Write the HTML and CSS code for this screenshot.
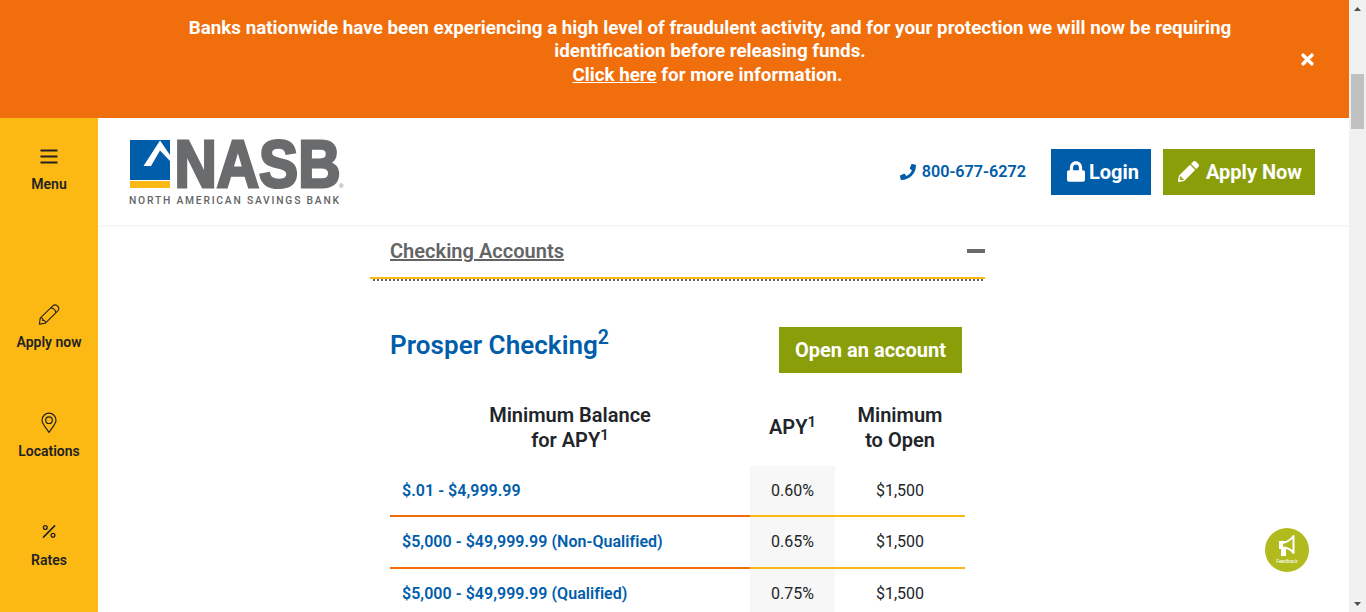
FILE: index.html
```html
<!DOCTYPE html>
<html lang="en">
<head>
<meta charset="utf-8">
<title>NASB Checking Rates</title>
<link rel="stylesheet" href="styles.css">
</head>
<body>
<div class="page">
  <div class="alert">
    <p class="alert-text">Banks nationwide have been experiencing a high level of fraudulent activity, and for your protection we will now be requiring<br>identification before releasing funds.<br><span class="alert-more"><a class="alert-link">Click here</a> for more information.</span></p>
    <svg class="close" viewBox="0 0 12 12"><path d="M2 2l8 8M10 2l-8 8" stroke="#fff" stroke-width="3.2" stroke-linecap="round"/></svg>
  </div>
  <div class="body">
    <nav class="side">
      <a class="side-item">
        <svg class="side-icon" viewBox="0 0 24 24"><path d="M3.5 6.5h17M3.5 12.5h17M3.5 18.5h17" stroke="#222" stroke-width="1.8"/></svg>
        <span>Menu</span>
      </a>
      <a class="side-item">
        <svg class="side-icon" viewBox="0 0 24 24" fill="none" stroke="#222" stroke-width="1.1" stroke-linejoin="round"><path d="M2.4 22.1l.8-6L15.8 3.9c1.5-1.5 3.4-1.2 4.8.2s1.6 3.2.2 4.7L8.2 21.3zM3.2 16.1c2.2-.4 3 .5 2.5 2.4 1.9-.4 2.900.6 2.5 2.8M13.8 5.9c2.7 0 4.9 2.2 5 4.8"/></svg>
        <span>Apply now</span>
      </a>
      <a class="side-item">
        <svg class="side-icon" viewBox="0 0 24 24" fill="none" stroke="#222" stroke-width="1.2"><path d="M12 21.300C9 17 5 12.700 5 9.200a7 7 0 0 1 14 0C19 12.700 15 17 12 21.300z"/><circle cx="12" cy="9.200" r="3.300"/></svg>
        <span>Locations</span>
      </a>
      <a class="side-item">
        <svg class="side-icon" viewBox="0 0 24 24" fill="none" stroke="#222" stroke-width="1.3"><path d="M17.600 5.900L6.500 17.100" stroke-width="1.600" stroke-linecap="round"/><circle cx="8.300" cy="7.500" r="1.900"/><circle cx="16" cy="15.300" r="1.900"/></svg>
        <span>Rates</span>
      </a>
    </nav>
    <div class="main">
      <header class="header">
        <svg class="logo" viewBox="0 0 216 68">
          <path d="M1 2h40v40H1z" fill="#005daa"/><path d="M1 43h40v7H1z" fill="#fdb913"/>
          <path d="M14.500 28L31 2.500 41 17v6L31 12.500 22 28z" fill="#fff"/>
          <text class="logo-name" x="45.500" y="49" textLength="166" lengthAdjust="spacingAndGlyphs">NASB</text>
          <text class="logo-reg" x="210" y="50">®</text>
          <text class="logo-sub" x="0" y="66" textLength="210">NORTH AMERICAN SAVINGS BANK</text>
        </svg>
        <div class="actions">
          <a class="phone"><svg class="phone-icon" viewBox="0 0 512 512" fill="currentColor"><path d="M493.400 24.600l-104-24c-11.300-2.600-22.900 3.300-27.500 13.900l-48 112c-4.200 9.800-1.400 21.300 6.900 28l60.600 49.600c-36 76.700-98.900 140.500-177.200 177.200l-49.600-60.600c-6.800-8.300-18.200-11.100-28-6.900l-112 48C3.900 366.500-2 378.100.6 389.400l24 104C27.100 504.200 36.700 512 48 512c256.100 0 464-207.500 464-464 0-11.200-7.700-20.900-18.600-23.400z"/></svg><span>800-677-6272</span></a>
          <a class="btn btn-login"><svg class="lock-icon" viewBox="0 0 448 512" fill="currentColor"><path d="M400 224h-24v-72C376 68.200 307.800 0 224 0S72 68.200 72 152v72H48c-26.500 0-48 21.500-48 48v192c0 26.500 21.500 48 48 48h352c26.500 0 48-21.500 48-48V272c0-26.500-21.500-48-48-48zm-104 0H152v-72c0-39.700 32.300-72 72-72s72 32.300 72 72v72z"/></svg><span>Login</span></a>
          <a class="btn btn-apply"><svg class="pencil-icon" viewBox="0 0 512 512" fill="currentColor"><path d="M497.900 142.100l-46.100 46.100c-4.700 4.700-12.300 4.700-17 0l-111-111c-4.700-4.700-4.700-12.300 0-17l46.100-46.100c18.700-18.700 49.100-18.700 67.900 0l60.100 60.100c18.800 18.700 18.800 49.100 0 67.900zM284.200 99.800L21.600 362.400.4 483.900c-2.900 16.400 11.400 30.600 27.800 27.800l121.500-21.300 262.600-262.600c4.700-4.700 4.700-12.300 0-17l-111-111c-4.800-4.700-12.400-4.700-17.100 0zM88 424h48v36.300l-64.500 11.300-31.100-31.100L51.700 376H88v48z"/></svg><span>Apply Now</span></a>
        </div>
      </header>
      <section class="content">
        <div class="accordion"><a class="accordion-title">Checking Accounts</a><span class="minus"></span></div>
        <svg class="rule" viewBox="0 0 615 4"><path d="M0 1h615" stroke="#fdb913" stroke-width="2"/><path d="M3 3h610" stroke="#636466" stroke-width="2" stroke-dasharray="2 2"/></svg>
        <div class="product"><h2 class="product-title">Prosper Checking<sup>2</sup></h2><a class="btn btn-open">Open an account</a></div>
        <table class="rates">
          <thead><tr><th class="col-balance">Minimum Balance<br>for APY<sup>1</sup></th><th class="col-apy">APY<sup>1</sup></th><th class="col-open">Minimum<br>to Open</th></tr></thead>
          <tbody>
            <tr><td class="tier">$.01 - $4,999.99</td><td class="apy">0.60%</td><td>$1,500</td></tr>
            <tr><td class="tier">$5,000 - $49,999.99 (Non-Qualified)</td><td class="apy">0.65%</td><td>$1,500</td></tr>
            <tr><td class="tier">$5,000 - $49,999.99 (Qualified)</td><td class="apy">0.75%</td><td>$1,500</td></tr>
          </tbody>
        </table>
      </section>
    </div>
  </div>
  <div class="feedback">
    <svg class="horn" viewBox="0 0 18 24"><path d="M5.500 8.500C10 8 13 5.500 15.500 2v17C13 15.500 11 14 5.500 13.500" fill="none" stroke="#fff" stroke-width="2" stroke-linejoin="round"/><path d="M1 7h6v2.500H5V13h3v9H3v-7H1z" fill="#fff"/></svg>
    <span class="feedback-label">Feedback</span>
  </div>
</div>
<div class="scrollbar">
  <svg class="arrow" viewBox="0 0 17 17"><path d="M5 11l3.500-4 3.500 4z" fill="#505050"/></svg>
  <div class="thumb"></div>
  <svg class="arrow arrow-down" viewBox="0 0 17 17"><path d="M5 7l3.500 4L12 7z" fill="#505050"/></svg>
</div>
</body>
</html>
```

FILE: styles.css
```css
* { box-sizing: border-box; }
body { margin: 0; width: 1366px; height: 612px; overflow: hidden; display: flex; font-family: Roboto, "Liberation Sans", sans-serif; color: #212529; background: #fff; }
svg { display: block; flex: none; }
.page { position: relative; width: 1349px; height: 612px; overflow: hidden; display: flex; flex-direction: column; }
.alert { height: 118px; flex: none; background: #f06e0c; display: flex; padding: 17px 35px 0 71px; color: #fff; }
.alert-text { flex: 1; margin: 0; padding-left: 48px; text-align: center; font-size: 18.8px; line-height: 23.4px; font-weight: 700; white-space: nowrap; }
.alert-more { padding-right: 5px; }
.alert-link { text-decoration: underline; }
.close { width: 13px; height: 13px; margin-top: 35.5px; }
.body { flex: 1; display: flex; min-height: 0; }
.side { width: 98px; flex: none; background: #fdb913; display: flex; flex-direction: column; align-items: center; color: #222; overflow: hidden; }
.side-item { flex: none; display: flex; flex-direction: column; align-items: center; gap: 7px; height: 109px; font-size: 14px; line-height: 18px; font-weight: 600; }
.side-item:first-child { margin-top: 26px; height: 158px; }
.side-icon { width: 24px; height: 24px; }
.main { flex: 1; display: flex; flex-direction: column; }
.header { height: 109px; flex: none; border-bottom: 2px solid #f7f7f7; display: flex; justify-content: space-between; padding: 20px 34px 0 31px; }
.logo { width: 216px; height: 68px; overflow: visible; }
.logo-name { font: 700 67px "Liberation Sans", sans-serif; fill: #6a6b6d; stroke: #6a6b6d; stroke-width: 3px; }
.logo-reg { font: 6px "Liberation Sans", sans-serif; fill: #6a6b6d; }
.logo-sub { font: 500 10.3px Roboto, sans-serif; fill: #636466; }
.actions { display: flex; align-items: center; height: 67px; }
.phone { display: flex; align-items: center; gap: 6px; color: #005daa; font-size: 16.2px; font-weight: 600; margin: 0 25px 0 0; }
.phone-icon { width: 16px; height: 16px; }
.btn { height: 46px; color: #fff; display: flex; align-items: center; font-size: 20px; font-weight: 700; white-space: nowrap; }
.btn-login { width: 100px; background: #005daa; padding-left: 16px; gap: 4px; margin-right: 12px; }
.lock-icon { width: 18px; height: 21px; }
.btn-apply { width: 152px; background: #8a9e0a; padding-left: 15px; gap: 7px; }
.pencil-icon { width: 21px; height: 21px; }
.content { width: 615px; margin-left: 272px; }
.accordion { height: 50px; padding: 0 0 2px 20px; display: flex; justify-content: space-between; align-items: center; }
.accordion-title { color: #636466; font-size: 20px; letter-spacing: .03px; font-weight: 600; text-decoration: underline; }
.minus { width: 18px; height: 4px; background: #6a6b6d; }
.rule { width: 615px; height: 4px; }
.product { display: flex; justify-content: space-between; padding: 46px 23px 0 20px; }
.product-title { margin: 0; color: #005daa; font-size: 26px; letter-spacing: .05px; line-height: 36px; font-weight: 600; }
sup { font-size: 75%; font-weight: 600; line-height: 0; position: relative; vertical-align: baseline; top: -.5em; }
.btn-open { width: 183px; background: #8a9e0a; justify-content: center; }
.rates { width: 575px; margin: 18px 0 0 20px; border-collapse: separate; border-spacing: 0; table-layout: fixed; }
.rates th { height: 75px; padding: 0 0 1px; font-size: 20px; line-height: 25px; font-weight: 600; text-align: center; }
.rates .col-apy { width: 85px; padding-bottom: 2px; }
.col-balance { width: 360px; }
.col-open { width: 130px; }
.rates td { height: 52px; padding: 0; font-size: 16px; line-height: 24px; font-weight: 400; text-align: center; border-bottom: 2px solid #fdb913; }
.rates tr:first-child td { height: 51px; }
.rates .tier { text-align: left; padding-left: 12px; letter-spacing: .04px; color: #005daa; font-weight: 600; border-bottom-color: #f06e0c; }
.rates .apy { background: #f7f7f7; }
.feedback { position: absolute; left: 1265px; top: 528px; width: 44px; height: 44px; border-radius: 50%; background: #b1bb1e; display: flex; flex-direction: column; align-items: center; padding-top: 6px; }
.horn { width: 18px; height: 24px; }
.feedback-label { font-size: 5px; line-height: 6px; color: #fff; }
.scrollbar { width: 17px; height: 612px; background: #f1f1f1; display: flex; flex-direction: column; }
.arrow { width: 17px; height: 17px; }
.thumb { width: 13px; height: 55px; margin: 57px 0 0 2px; background: #c1c1c1; }
.arrow-down { margin-top: auto; }
```
